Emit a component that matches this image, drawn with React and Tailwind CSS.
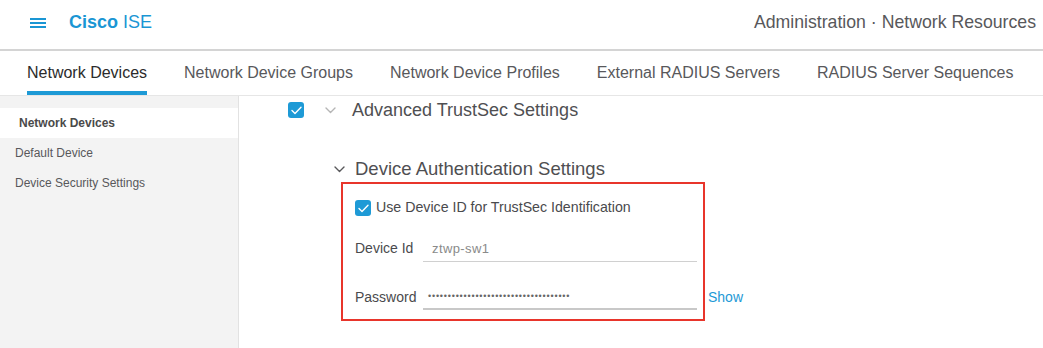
import React from "react";

const font = { fontFamily: '"Liberation Sans", Arial, sans-serif' };

function Check({ className = "" }) {
  return (
    <span className={"flex items-center justify-center rounded-[3px] bg-[#1e9ad6] " + className}>
      <svg width="11" height="9" viewBox="0 0 11 9" fill="none">
        <path d="M1 4.6 L4 7.4 L10 1.2" stroke="white" strokeWidth="1.4" strokeLinecap="round" strokeLinejoin="round" />
      </svg>
    </span>
  );
}

function Chevron({ color = "#9a9a9a", w = 11 }) {
  return (
    <svg width={w} height="7" viewBox="0 0 11 7" fill="none">
      <path d="M1 1 L5.5 5.5 L10 1" stroke={color} strokeWidth="1.4" strokeLinecap="round" strokeLinejoin="round" />
    </svg>
  );
}

export default function App() {
  const tabs = [
    "Network Devices",
    "Network Device Groups",
    "Network Device Profiles",
    "External RADIUS Servers",
    "RADIUS Server Sequences",
  ];
  const dots = Array.from({ length: 36 }, () => "•").join("");
  return (
    <div className="w-[1043px] h-[348px] overflow-hidden bg-white flex flex-col" style={font}>
      {/* Header */}
      <div className="h-[49px] pb-[4px] flex items-center justify-between shrink-0">
        <div className="flex items-center">
          <div className="ml-[30px] w-[16px] flex flex-col gap-[2px] mt-[1px]">
            <span className="h-[2px] bg-[#1a96d4]" />
            <span className="h-[2px] bg-[#1a96d4]" />
            <span className="h-[2px] bg-[#1a96d4]" />
          </div>
          <div className="ml-[23px] text-[18px] text-[#1a96d4]">
            <span className="font-bold">Cisco</span> ISE
          </div>
        </div>
        <div className="mr-[7px] text-[17.7px] text-[#58585b]">Administration · Network Resources</div>
      </div>
      <div className="h-[2px] bg-[#d4d4d4] shrink-0" />
      {/* Tabs */}
      <div className="h-[45px] flex items-stretch gap-[37px] pl-[27px] border-b border-[#e6e6e6] shrink-0">
        {tabs.map((t, i) => (
          <div key={t} className="relative flex items-center text-[16px]">
            <span className={i === 0 ? "text-[#2b2b2b]" : "text-[#58585b]"}>{t}</span>
            {i === 0 && <span className="absolute left-0 right-0 bottom-[0px] h-[4px] bg-[#1e9ad6]" />}
          </div>
        ))}
      </div>
      {/* Body */}
      <div className="flex flex-1 min-h-0">
        <div className="w-[239px] shrink-0 bg-[#f3f3f3] border-r border-[#e2e2e2] pt-[12px]">
          <div className="h-[30px] bg-white flex items-center pl-[19px] text-[12px] font-bold text-[#4a4a4a]">Network Devices</div>
          <div className="h-[30px] flex items-center pl-[15px] text-[12px] text-[#58585b]">Default Device</div>
          <div className="h-[29px] flex items-center pl-[15px] text-[12px] text-[#58585b]">Device Security Settings</div>
        </div>
        <div className="flex-1 pl-[49px] pt-[6px]">
          <div className="flex items-center h-[16px]">
            <Check className="w-[16px] h-[16px]" />
            <span className="ml-[21px] mt-[1px]"><Chevron color="#b5b5b5" /></span>
            <span className="ml-[16px] text-[18px] text-[#4f4f52]">Advanced TrustSec Settings</span>
          </div>
          <div className="ml-[46px] mt-[41px]">
            <div className="flex items-center h-[20px]">
              <Chevron color="#58585b" />
              <span className="ml-[10px] text-[18.5px] text-[#4f4f52]">Device Authentication Settings</span>
            </div>
            <div className="flex items-start">
              <div className="ml-[7px] mt-[3px] w-[364px] h-[139px] border-2 border-[#e8352b] pl-[12px] pt-[16px]">
                <div className="flex items-center h-[16px]">
                  <Check className="w-[16px] h-[16px]" />
                  <span className="ml-[5px] text-[14.2px] text-[#4a4a4d]">Use Device ID for TrustSec Identification</span>
                </div>
                <div className="flex mt-[20px] h-[26px]">
                  <span className="w-[68px] pt-[2px] text-[14px] leading-[20px] text-[#4a4a4d]">Device Id</span>
                  <div className="w-[274px] border-b border-[#d0d0d0] pl-[9px] pt-[3px] text-[13px] leading-[20px] text-[#8a8a8a] tracking-[0.4px]">ztwp-sw1</div>
                </div>
                <div className="flex mt-[22px] h-[26px]">
                  <span className="w-[68px] pt-[3px] text-[14px] leading-[20px] text-[#4a4a4d]">Password</span>
                  <div className="w-[274px] border-b-2 border-[#c8c8c8] pl-[5px] pt-[5px] text-[9px] leading-[14px] text-[#666] tracking-[0.8px]">{dots}</div>
                </div>
              </div>
              <span className="ml-[3px] mt-[108px] text-[14px] leading-[20px] text-[#1e9ad6]">Show</span>
            </div>
          </div>
        </div>
      </div>
    </div>
  );
}
